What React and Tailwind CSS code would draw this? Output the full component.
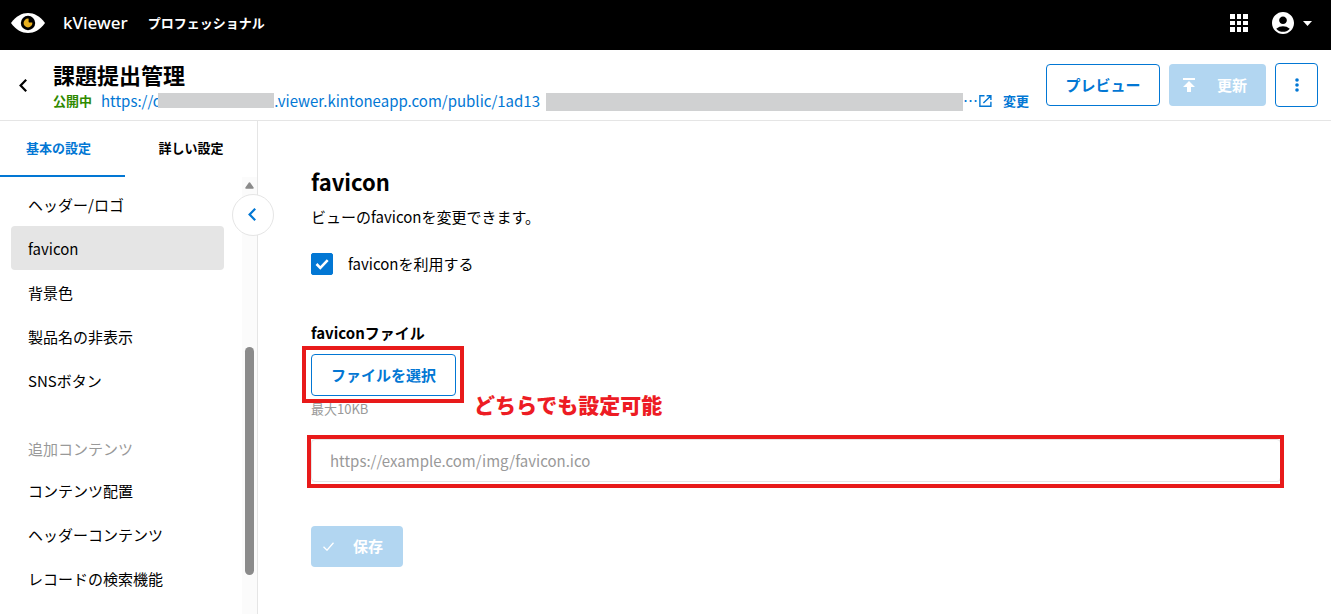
import { useState } from "react";

const basicMenu = ["ヘッダー/ロゴ", "favicon", "背景色", "製品名の非表示", "SNSボタン"];
const contentMenu = ["コンテンツ配置", "ヘッダーコンテンツ", "レコードの検索機能"];

const Logo = () => (
    <svg width="34" height="20" viewBox="0 0 34 20" aria-hidden="true">
        <path d="M0 10C5 3 11 0 17 0s12 3 17 10c-5 7-11 10-17 10S5 17 0 10z" fill="#fff" />
        <circle cx="17" cy="10" r="7.2" fill="#000" />
        <circle cx="17" cy="10" r="4.4" fill="#e8b020" />
        <path d="M17.6 5v3.6c0 .6.4 1 1 1H22V5z" fill="#000" />
    </svg>
);

const GridIcon = () => (
    <svg width="18" height="18" viewBox="0 0 18 18" fill="#fff" aria-hidden="true">
        <path d="M0 0h5v5H0zM7 0h4v5H7zM13 0h5v5h-5zM0 7h5v4H0zM7 7h4v4H7zM13 7h5v4h-5zM0 13h5v5H0zM7 13h4v5H7zM13 13h5v5h-5z" />
    </svg>
);

const AccountIcon = () => (
    <svg width="22" height="22" viewBox="2 2 20 20" fill="#fff" aria-hidden="true">
        <path d="M12 2C6.48 2 2 6.48 2 12s4.48 10 10 10 10-4.48 10-10S17.52 2 12 2zm0 4c1.93 0 3.5 1.57 3.5 3.5S13.93 13 12 13s-3.5-1.57-3.5-3.5S10.07 6 12 6zm0 14c-2.03 0-4.43-.82-6.14-2.88a9.95 9.95 0 0 1 12.28 0C16.43 19.18 14.03 20 12 20z" />
    </svg>
);

const ChevronLeft = () => (
    <svg width="8" height="13" viewBox="0 0 8 13" fill="none" stroke="currentColor" strokeWidth="2.2" aria-hidden="true">
        <path d="M7.2 0.8L1.6 6.5l5.6 5.7" />
    </svg>
);

const PublishIcon = () => (
    <svg width="12" height="14" viewBox="0 0 12 14" fill="#fff" aria-hidden="true">
        <path d="M0 0h12v2H0zM6 3l6 6H8v5H4V9H0z" />
    </svg>
);

const OpenIcon = () => (
    <svg width="13" height="12" viewBox="0 0 13 12" fill="none" stroke="#0277d4" strokeWidth="1.4" aria-hidden="true">
        <path d="M5.5 0.7H0.9v10.6h11V6.8M7.6 0.7h4.3v4.2M11.7 0.9L4.4 8.1" />
    </svg>
);

const Header = () => (
    <header className="flex h-[50px] items-center justify-between bg-black pr-[19px] pb-1 pl-[11px] text-white">
        <div className="flex items-center">
            <Logo />
            <span className="ml-[18px] font-['Noto_Sans',sans-serif] text-[17px] leading-6 font-medium">kViewer</span>
            <span className="ml-5 text-[13px] leading-5 font-bold">プロフェッショナル</span>
        </div>
        <div className="flex items-center gap-6">
            <button type="button" aria-label="アプリ一覧">
                <GridIcon />
            </button>
            <button type="button" aria-label="アカウント" className="flex items-center gap-[9px]">
                <AccountIcon />
                <svg width="9" height="5" viewBox="0 0 9 5" fill="#fff" aria-hidden="true">
                    <path d="M0 0h9L4.500 5z" />
                </svg>
            </button>
        </div>
    </header>
);

const ViewBar = () => (
    <div className="flex h-[71px] items-center border-b border-[#e5e5e5] pr-[13px] pl-[19px]">
        <button type="button" aria-label="戻る">
            <ChevronLeft />
        </button>
        <div className="ml-[26px] min-w-0">
            <h1 className="text-[22px] leading-7 font-bold">課題提出管理</h1>
            <div className="mt-[3px] flex items-center whitespace-nowrap">
                <span className="text-[13px] leading-5 font-bold text-[#2f8a00]">公開中</span>
                <a href="#view" className="ml-[9px] flex items-center text-[15px] leading-5 text-[#0277d4]">
                    <span>https://d</span>
                    <span className="mt-[2px] -ml-1 h-[15px] w-[116px] self-start bg-[#d0d1d2]" />
                    <span className="pr-[6px]">.viewer.kintoneapp.com/public/1ad13</span>
                    <span className="mt-[2px] h-[18px] w-[417px] self-start bg-[#d0d1d2]" />
                    <span className="pr-px">…</span>
                    <OpenIcon />
                </a>
                <button type="button" className="ml-[11px] text-[13px] leading-5 font-bold text-[#0277d4]">変更</button>
            </div>
        </div>
        <div className="ml-auto flex shrink-0 items-center gap-[9px]">
            <button type="button" className="h-[42px] w-[114px] rounded border border-[#0277d4] text-[15px] font-bold text-[#0277d4]">
                プレビュー
            </button>
            <button type="button" disabled className="flex h-[42px] w-[97px] items-center gap-[22px] rounded bg-[#b2d6f1] pl-[14px] text-[15px] font-bold text-white">
                <PublishIcon />
                更新
            </button>
            <button type="button" aria-label="メニュー" className="flex h-11 w-[43px] items-center justify-center rounded border border-[#0277d4]">
                <svg width="4" height="14" viewBox="0 0 4 14" fill="#0277d4" aria-hidden="true">
                    <circle cx="2" cy="2" r="1.8" />
                    <circle cx="2" cy="7" r="1.8" />
                    <circle cx="2" cy="12" r="1.8" />
                </svg>
            </button>
        </div>
    </div>
);

const MenuItem = ({ label, selected, onSelect }) => (
    <li>
        <button
            type="button"
            onClick={() => onSelect(label)}
            className={`h-11 w-full rounded pt-[2px] pl-[17px] text-left text-[15px] ${selected ? "bg-[#e5e5e5]" : ""}`}
        >
            {label}
        </button>
    </li>
);

const Sidebar = () => {
    const [selected, setSelected] = useState("favicon");

    return (
        <aside className="relative flex w-[258px] shrink-0 flex-col border-r border-[#e5e5e5]">
            <div className="flex h-14 text-[13px] font-bold">
                <button type="button" className="w-[125px] border-b-2 border-[#0277d4] pr-2 text-[#0277d4]">基本の設定</button>
                <button type="button" className="flex-1 border-b-2 border-transparent">詳しい設定</button>
            </div>
            <div className="flex flex-1">
                <nav className="flex-1 pt-[5px] pr-[18px] pl-[11px]">
                    <ul>
                        {basicMenu.map(label => (
                            <MenuItem key={label} label={label} selected={selected === label} onSelect={setSelected} />
                        ))}
                    </ul>
                    <h2 className="mt-[35px] mb-[7px] pl-[17px] text-[15px] leading-6 text-[#999]">追加コンテンツ</h2>
                    <ul>
                        {contentMenu.map(label => (
                            <MenuItem key={label} label={label} selected={selected === label} onSelect={setSelected} />
                        ))}
                    </ul>
                </nav>
                {/* scroll track */}
                <div className="flex w-[15px] flex-col items-center bg-[#fbfbfb] pt-[5px]">
                    <svg width="9" height="7" viewBox="0 0 9 7" aria-hidden="true">
                        <path d="M4.500 1L8 6H1z" fill="#8b8b8b" stroke="#8b8b8b" strokeWidth="1.500" strokeLinejoin="round" />
                    </svg>
                    <div className="mt-[158px] h-[228px] w-[9px] rounded-full bg-[#8b8b8b]" />
                </div>
            </div>
            <button
                type="button"
                aria-label="サイドバーを閉じる"
                className="absolute top-[73px] -right-[17px] flex h-[42px] w-[42px] items-center justify-center rounded-full border border-[#e5e5e5] bg-white pr-[2px] pb-[2px] text-[#0277d4]"
            >
                <ChevronLeft />
            </button>
        </aside>
    );
};

const FaviconSettings = () => {
    const [enabled, setEnabled] = useState(true);
    const [url, setUrl] = useState("");

    return (
        <main className="min-w-0 flex-1 pt-11 pr-[50px] pl-[53px]">
            <h2 className="text-[22px] leading-8 font-bold">favicon</h2>
            <p className="mt-2 text-[15px] leading-6">ビューのfaviconを変更できます。</p>
            <label className="mt-6 flex w-fit items-center gap-[15px] text-[15px] leading-[22px]">
                <span className="relative flex h-[22px] w-[22px]">
                    <input
                        type="checkbox"
                        checked={enabled}
                        onChange={e => setEnabled(e.target.checked)}
                        className="h-full w-full appearance-none rounded-xs border border-[#0277d4] checked:bg-[#0277d4]"
                    />
                    {enabled && (
                        <svg className="pointer-events-none absolute inset-0" width="22" height="22" viewBox="0 0 22 22" fill="none" stroke="#fff" strokeWidth="2.600" aria-hidden="true">
                            <path d="M5.500 11l3.800 3.800 7.400-7.600" />
                        </svg>
                    )}
                </span>
                faviconを利用する
            </label>
            <h3 className="mt-[46px] text-[15px] leading-6 font-bold">faviconファイル</h3>
            <div className="relative mt-[9px] w-fit">
                <button type="button" className="block h-[42px] w-[145px] rounded border border-[#0277d4] text-[15px] font-bold text-[#0277d4]">
                    ファイルを選択
                </button>
                <div className="pointer-events-none absolute -top-2 -right-2 -bottom-[7px] -left-[9px] border-4 border-[#e81a1a]" />
                <p className="absolute top-[34px] left-[163px] text-[21px] leading-8 font-black whitespace-nowrap text-[#ed1c24]">どちらでも設定可能</p>
            </div>
            <p className="mt-[3px] text-[13px] leading-5 text-[#999]">最大10KB</p>
            <div className="relative mt-5">
                <input
                    type="url"
                    aria-label="faviconのURL"
                    value={url}
                    onChange={e => setUrl(e.target.value)}
                    placeholder="https://example.com/img/favicon.ico"
                    className="block h-[43px] w-full rounded border border-[#e5e5e5] px-[18px] text-[15px] placeholder:text-[#999]"
                />
                <div className="pointer-events-none absolute -top-1 -right-[3px] -bottom-[6px] -left-1 border-4 border-[#e81a1a]" />
            </div>
            <button type="button" disabled className="mt-11 flex h-[41px] w-[92px] items-center gap-[19px] rounded bg-[#b2d6f1] pl-3 text-[15px] font-bold text-white">
                <svg width="11" height="9" viewBox="0 0 11 9" fill="none" stroke="#fff" strokeWidth="1.300" aria-hidden="true">
                    <path d="M0.500 4.800L4 8.200 10.500 0.700" />
                </svg>
                保存
            </button>
        </main>
    );
};

const App = () => {
    return (
        <div className="flex min-h-screen flex-col bg-white font-['Noto_Sans_CJK_JP',sans-serif] text-black">
            <Header />
            <ViewBar />
            <div className="flex flex-1">
                <Sidebar />
                <FaviconSettings />
            </div>
        </div>
    );
};

export default App;
